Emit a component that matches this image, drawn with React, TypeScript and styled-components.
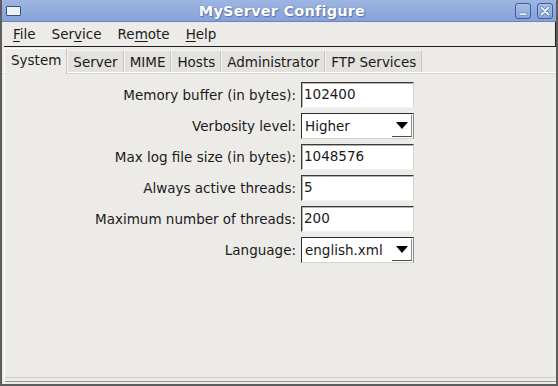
import React from "react";
import styled, { createGlobalStyle } from "styled-components";

const Global = createGlobalStyle`
  html, body { margin: 0; padding: 0; background: #edebe8; }
  body { font-family: "DejaVu Sans", "Liberation Sans", sans-serif; }
  * { box-sizing: border-box; }
`;

const Window = styled.div`
  width: 558px;
  height: 386px;
  display: flex;
  flex-direction: column;
  background: #edebe8;
  border-left: 2px solid #5d5d5d;
  border-right: 2px solid #5d5d5d;
  border-bottom: 2px solid #5d5d5d;
  overflow: hidden;
`;

const TitleBar = styled.div`
  height: 22px;
  margin: 0 -2px;
  display: flex;
  align-items: center;
  justify-content: space-between;
  padding: 0 5px 0 6px;
  background: linear-gradient(#9db5e2, #86a2d8);
  border-bottom: 1px solid #6b86bd;
  border-top-left-radius: 4px;
  border-top-right-radius: 4px;
`;

const AppIcon = styled.div`
  width: 15px;
  height: 10px;
  background: #eef1f3;
  border: 1px solid #3b4f78;
  border-radius: 1px;
`;

const Title = styled.div`
  flex: 1;
  text-align: center;
  color: #fff;
  font-weight: bold;
  font-size: 14.5px;
  letter-spacing: 0.2px;
  text-shadow: 0 0 1px #4d67a0, 1px 1px 1px #5a74a8;
  padding-left: 28px;
`;

const Buttons = styled.div`
  display: flex;
  gap: 6px;
`;

const WinButton = styled.div`
  width: 16px;
  height: 16px;
  border: 1px solid #3e5c98;
  border-radius: 3px;
  background: linear-gradient(#a9bfe7, #8aa6da);
  display: flex;
  align-items: center;
  justify-content: center;
`;

const MenuBar = styled.div`
  height: 25px;
  display: flex;
  align-items: center;
  padding-left: 1px;
  border-bottom: 1px solid #1e1e1e;
  border-right: 1px solid #1e1e1e;
  margin-left: 2px;
`;

const MenuItem = styled.div`
  font-size: 13.5px;
  color: #1a1a1a;
  padding: 0 8px;
  margin-right: 0;
  u { text-decoration: underline; text-underline-offset: 2px; }
`;

const TabRow = styled.div`
  display: flex;
  height: 26px;
  padding-top: 1px;
  padding-left: 2px;
  border-bottom: 1px solid #ffffff;
  box-shadow: 0 1px 0 #d8d5d0;
`;

const Tab = styled.div<{ $active?: boolean }>`
  font-size: 13.5px;
  color: #1a1a1a;
  padding: 3px 5px 0 ${(p) => (p.$active ? "6px" : "5px")};
  background: ${(p) => (p.$active ? "#edebe8" : "#e4e2de")};
  border-left: 1px solid ${(p) => (p.$active ? "#ffffff" : "#f6f5f3")};
  border-right: 1px solid #c9c6c1;
  border-top: 1px solid ${(p) => (p.$active ? "#ffffff" : "#f6f5f3")};
  margin-top: ${(p) => (p.$active ? "0" : "2px")};
  margin-bottom: ${(p) => (p.$active ? "-2px" : "0")};
  position: relative;
  z-index: ${(p) => (p.$active ? 1 : 0)};
  white-space: nowrap;
`;

const Panel = styled.div`
  flex: 1;
  padding: 9px 0 0 0;
  border-left: 1px solid #ffffff;
  margin-left: 2px;
  display: flex;
  flex-direction: column;
`;

const Form = styled.div`
  display: grid;
  grid-template-columns: 291px 113px;
  column-gap: 5px;
  row-gap: 5px;
  align-items: center;
`;

const Label = styled.div`
  text-align: right;
  font-size: 13.5px;
  color: #1a1a1a;
  white-space: nowrap;
`;

const Entry = styled.div`
  height: 26px;
  background: #fff;
  border-top: 1px solid #3a3a3a;
  border-left: 1px solid #3a3a3a;
  border-right: 1px solid #d6d3ce;
  border-bottom: 1px solid #f4f3f1;
  font-size: 13.5px;
  color: #1a1a1a;
  padding: 3px 0 0 2px;
  box-shadow: inset 1px 1px 0 #b5b2ad;
`;

const Combo = styled.div`
  height: 26px;
  background: #fff;
  border-top: 1px solid #2e2e2e;
  border-left: 1px solid #2e2e2e;
  border-right: 1px solid #8e8b86;
  border-bottom: 1px solid #d6d3ce;
  display: flex;
  align-items: center;
  justify-content: space-between;
  font-size: 13.5px;
  color: #1a1a1a;
  padding-left: 3px;
`;

const Arrow = styled.div`
  width: 20px;
  height: 22px;
  margin-right: 1px;
  border-right: 1px solid #8e8b86;
  border-bottom: 1px solid #4a4a4a;
  display: flex;
  align-items: center;
  justify-content: center;
`;

const Footer = styled.div`
  margin-top: auto;
  height: 5px;
  border-top: 1px solid #d2cfca;
  border-bottom: 1px solid #9c9995;
  margin-bottom: 2px;
`;

const rows: { label: string; value: string; combo?: boolean }[] = [
  { label: "Memory buffer (in bytes):", value: "102400" },
  { label: "Verbosity level:", value: "Higher", combo: true },
  { label: "Max log file size (in bytes):", value: "1048576" },
  { label: "Always active threads:", value: "5" },
  { label: "Maximum number of threads:", value: "200" },
  { label: "Language:", value: "english.xml", combo: true },
];

export default function App() {
  return (
    <>
      <Global />
      <Window>
        <TitleBar>
          <AppIcon />
          <Title>MyServer Configure</Title>
          <Buttons>
            <WinButton>
              <svg width="12" height="12" viewBox="0 0 12 12">
                <rect x="2" y="8" width="8" height="2.4" fill="#eef2fa" stroke="#5d78b0" strokeWidth="0.6" />
              </svg>
            </WinButton>
            <WinButton>
              <svg width="12" height="12" viewBox="0 0 12 12">
                <path d="M2.5 2.5 L9.5 9.5 M9.5 2.5 L2.5 9.5" stroke="#5d78b0" strokeWidth="3.4" strokeLinecap="round" />
                <path d="M2.5 2.5 L9.5 9.5 M9.5 2.5 L2.5 9.5" stroke="#eef2fa" strokeWidth="2" strokeLinecap="round" />
              </svg>
            </WinButton>
          </Buttons>
        </TitleBar>
        <MenuBar>
          <MenuItem><u>F</u>ile</MenuItem>
          <MenuItem>Ser<u>v</u>ice</MenuItem>
          <MenuItem>Re<u>m</u>ote</MenuItem>
          <MenuItem><u>H</u>elp</MenuItem>
        </MenuBar>
        <TabRow>
          <Tab $active>System</Tab>
          <Tab>Server</Tab>
          <Tab>MIME</Tab>
          <Tab>Hosts</Tab>
          <Tab>Administrator</Tab>
          <Tab>FTP Services</Tab>
        </TabRow>
        <Panel>
          <Form>
            {rows.map((r) => (
              <React.Fragment key={r.label}>
                <Label>{r.label}</Label>
                {r.combo ? (
                  <Combo>
                    {r.value}
                    <Arrow>
                      <svg width="12" height="8" viewBox="0 0 12 8">
                        <path d="M0 0 H12 L6 7 Z" fill="#000" />
                      </svg>
                    </Arrow>
                  </Combo>
                ) : (
                  <Entry>{r.value}</Entry>
                )}
              </React.Fragment>
            ))}
          </Form>
          <Footer />
        </Panel>
      </Window>
    </>
  );
}
